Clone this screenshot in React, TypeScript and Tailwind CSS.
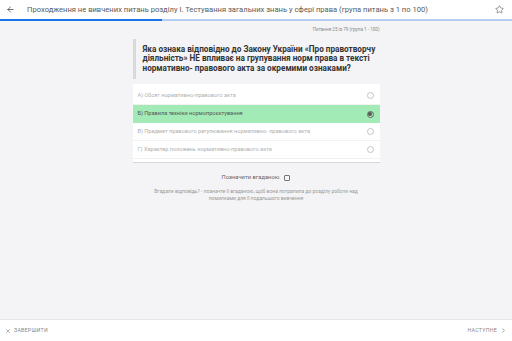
import { ArrowLeft, Star, X, ChevronRight } from 'lucide-react'

const options = [
  { id: 'a', label: 'А) Обсяг нормативно-правового акта', selected: false },
  { id: 'b', label: 'Б) Правила техніки нормопроєктування', selected: true },
  { id: 'c', label: 'В) Предмет правового регулювання нормативно- правового акта', selected: false },
  { id: 'd', label: 'Г) Характер положень нормативно-правового акта', selected: false },
]

export default function App() {
  const current = 25
  const total = 79

  return (
    <div className="w-[512px] h-[341px] flex flex-col bg-[#f4f4f6] font-['Roboto','Liberation_Sans',sans-serif] overflow-hidden">
      <header className="bg-white">
        <div className="h-[19px] flex items-center pl-[6px] pr-[8px]">
          <ArrowLeft className="w-[9px] h-[9px] text-[#444]" strokeWidth={2} />
          <div className="ml-[12px] flex-1 text-[7.6px] text-[#5a5a5a] whitespace-nowrap leading-none">
            Проходження не вивчених питань розділу І. Тестування загальних знань у сфері права (група питань з 1 по 100)
          </div>
          <Star className="w-[9px] h-[9px] text-[#555]" strokeWidth={1.6} />
        </div>
        <div className="h-[2px] bg-[#b3cdf5]">
          <div className="h-full bg-[#1a73e8]" style={{ width: `${(current / total) * 100}%` }} />
        </div>
      </header>

      <main className="flex-1 flex flex-col">
        <div className="w-[247px] mx-auto">
          <div className="pt-[7px] text-right text-[4.6px] text-[#888] leading-none">
            Питання 25 із 79 (група 1 - 100)
          </div>
          <div className="mt-[6px] border-l-[3px] border-[#d9d9d9] pl-[7px] pt-[6px] pb-[6px] text-[8.2px] font-bold text-[#333] leading-[9.5px]">
            Яка ознака відповідно до Закону України «Про правотворчу діяльність» НЕ впливає на групування норм права в тексті нормативно- правового акта за окремими ознаками?
          </div>

          <div className="mt-[5px] bg-white border-b border-[#d6d6d6] pt-[3px] pb-[3px]">
            {options.map((o) => (
              <div
                key={o.id}
                className={
                  'h-[18px] flex items-center pl-[5px] pr-[6px] ' +
                  (o.selected ? 'bg-[#a2ebb6] text-[#555]' : 'text-[#b0b0b0] border-b border-[#f2f2f2]')
                }
              >
                <span className="flex-1 text-[5.6px] leading-none">{o.label}</span>
                <span
                  className={
                    'w-[7px] h-[7px] rounded-full border flex items-center justify-center ' +
                    (o.selected ? 'border-[#666]' : 'border-[#c4c4c4]')
                  }
                >
                  {o.selected && <span className="w-[3.5px] h-[3.5px] rounded-full bg-[#555]" />}
                </span>
              </div>
            ))}
          </div>

          <div className="mt-[12px] flex items-center justify-center gap-[5px] text-[5.8px] text-[#666] leading-none">
            <span>Позначити вгаданою</span>
            <span className="w-[6px] h-[6px] border border-[#777] rounded-[1px]" />
          </div>
          <div className="mt-[7px] mx-auto w-[226px] text-center text-[5px] text-[#999] leading-[7px]">
            Вгадали відповідь? - позначте її вгаданою, щоб вона потрапила до розділу роботи над помилками для її подальшого вивчення
          </div>
        </div>
      </main>

      <footer className="h-[22px] bg-white border-t border-[#e6e6e6] flex items-center justify-between pl-[5px] pr-[5px]">
        <div className="flex items-center gap-[3px] text-[5.2px] text-[#888] tracking-[0.3px] leading-none">
          <X className="w-[6px] h-[6px] text-[#666]" strokeWidth={2} />
          <span>ЗАВЕРШИТИ</span>
        </div>
        <div className="flex items-center gap-[3px] text-[5.2px] text-[#888] tracking-[0.3px] leading-none">
          <span>НАСТУПНЕ</span>
          <ChevronRight className="w-[7px] h-[7px] text-[#666]" strokeWidth={2} />
        </div>
      </footer>
    </div>
  )
}
